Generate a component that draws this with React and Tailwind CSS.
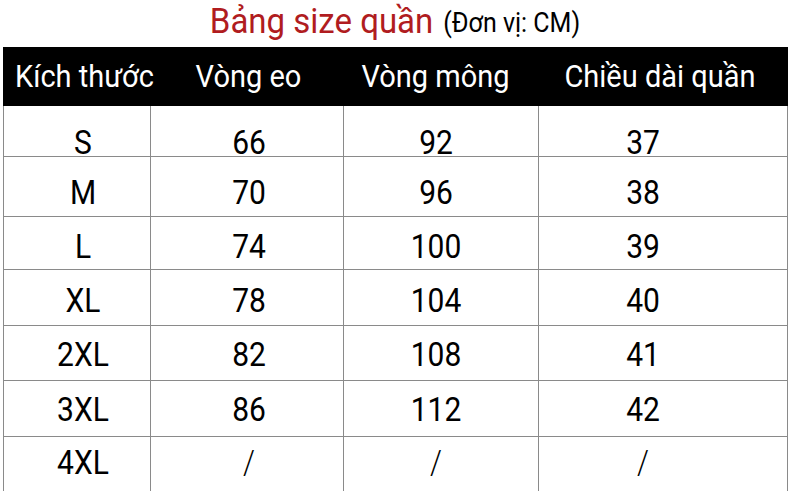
import React from "react";

const rows = [
  { s: "S", a: "66", b: "92", c: "37", h: "h-[50px]", p: "pt-[14px]" },
  { s: "M", a: "70", b: "96", c: "38", h: "h-[60px]", p: "pt-[12px]" },
  { s: "L", a: "74", b: "100", c: "39", h: "h-[53px]", p: "pt-[7px]" },
  { s: "XL", a: "78", b: "104", c: "40", h: "h-[56px]", p: "pt-[6px]" },
  { s: "2XL", a: "82", b: "108", c: "41", h: "h-[55px]", p: "pt-[3px]" },
  { s: "3XL", a: "86", b: "112", c: "42", h: "h-[56px]", p: "pt-[1px]" },
  { s: "4XL", a: "/", b: "/", c: "/", h: "h-[55px]", p: "pb-[3px]", slash: true },
];

function T({ children, light }) {
  return (
    <span className={"inline-block scale-y-[1.1] " + (light ? "font-light" : "")}>{children}</span>
  );
}

export default function App() {
  return (
    <div
      className="w-[790px] h-[491px] bg-white overflow-hidden"
      style={{ fontFamily: "Roboto, 'Noto Sans', sans-serif" }}
    >
      <div className="h-[47px] flex items-center justify-center pb-[6px] gap-[10px]">
        <span className="inline-block scale-y-[1.08] text-[33px] text-[#b01c20] leading-none">Bảng size quần</span>
        <span className="inline-block scale-y-[1.08] text-[25px] text-black leading-none pt-[4px]">(Đơn vị: CM)</span>
      </div>
      <div className="ml-[3px] w-[785px]">
        <div className="h-[59px] bg-black text-white text-[29px] grid grid-cols-[147px_193px_195px_250px] items-center">
          <div className="text-center pl-[12px] whitespace-nowrap"><T>Kích thước</T></div>
          <div className="text-center pl-[4px]"><T>Vòng eo</T></div>
          <div className="text-center pr-[10px]"><T>Vòng mông</T></div>
          <div className="text-center pr-[6px]"><T>Chiều dài quần</T></div>
        </div>
        {rows.map((r, i) => (
          <div
            key={r.s}
            className={
              "grid grid-cols-[147px_193px_195px_250px] border-l border-r border-[#8a8a8a] text-[30px] text-black " +
              (i > 0 ? "border-t " : "") +
              r.h
            }
          >
            <div className={"flex items-center justify-center pl-[12px] border-r border-[#8a8a8a] " + r.p}><T>{r.s}</T></div>
            <div className={"flex items-center justify-center pl-[4px] border-r border-[#8a8a8a] " + r.p}><T light={r.slash}>{r.a}</T></div>
            <div className={"flex items-center justify-center pr-[10px] border-r border-[#8a8a8a] " + r.p}><T light={r.slash}>{r.b}</T></div>
            <div className={"flex items-center justify-center pr-[42px] " + r.p}><T light={r.slash}>{r.c}</T></div>
          </div>
        ))}
      </div>
    </div>
  );
}
